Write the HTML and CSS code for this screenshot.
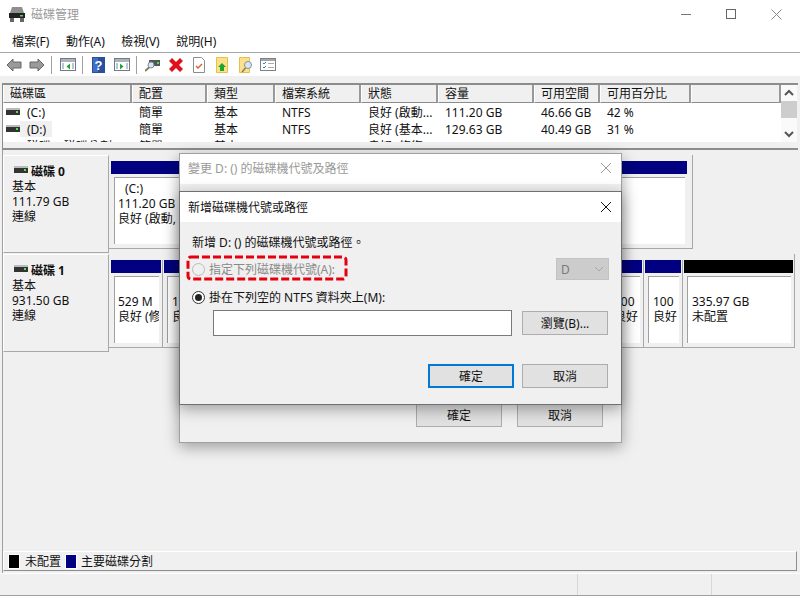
FILE: index.html
```html
<!DOCTYPE html>
<html lang="zh-Hant">
<head>
<meta charset="utf-8">
<title>磁碟管理</title>
<link rel="stylesheet" href="styles.css">
</head>
<body>
<div class="window">
  <header class="titlebar">
    <svg class="app-icon" width="16" height="15" viewBox="0 0 16 15"><path d="M3 0h10l2 6H1z" fill="#8f8f8f"/><rect y="6" width="16" height="5" fill="#222"/><rect x="11" y="8" width="3" height="1.500" fill="#4ce04c"/><rect x="1" y="11" width="4" height="4" fill="#666"/><rect x="11" y="11" width="4" height="4" fill="#666"/></svg>
    <span class="title-text">磁碟管理</span>
    <div class="caption">
      <svg width="11" height="11" viewBox="0 0 11 11"><path d="M0 5.500h10" stroke="#777" fill="none"/></svg>
      <svg width="11" height="11" viewBox="0 0 11 11"><rect x=".5" y=".5" width="9" height="9" stroke="#666" fill="none"/></svg>
      <svg width="11" height="11" viewBox="0 0 11 11"><path d="M.5.500l10 10M10.500.500l-10 10" stroke="#888" fill="none"/></svg>
    </div>
  </header>
  <nav class="menubar"><span>檔案(F)</span><span>動作(A)</span><span>檢視(V)</span><span>說明(H)</span></nav>
  <div class="toolbar">
    <svg class="tool" width="16" height="14" viewBox="0 0 16 14"><path d="M7 1L1 7l6 6V10h8V4H7z" fill="#9a9a9a" stroke="#666"/></svg>
    <svg class="tool t2" width="16" height="14" viewBox="0 0 16 14"><path d="M9 1l6 6-6 6V10H1V4h8z" fill="#9a9a9a" stroke="#666"/></svg>
    <i class="sep"></i>
    <svg class="tool t3" width="16" height="13" viewBox="0 0 16 13"><rect x=".5" y=".5" width="15" height="12" fill="#fff" stroke="#778"/><rect x="1" y="1" width="14" height="3" fill="#a9b4bb"/><path d="M2 6h2M2 8h2M2 10h2M12 6h2M12 8h2M12 10h2" stroke="#6b8fb5"/><path d="M10 5.500v6L6.500 8.500z" fill="#1fa52f"/></svg>
    <i class="sep s2"></i>
    <svg class="tool t4" width="13" height="16" viewBox="0 0 13 16"><rect width="13" height="16" fill="#2a4f9e"/><rect x="1" y="1" width="5" height="14" fill="#3f70c4"/><text x="6.500" y="12.500" class="help-q">?</text></svg>
    <svg class="tool t5" width="16" height="13" viewBox="0 0 16 13"><rect x=".5" y=".5" width="15" height="12" fill="#fff" stroke="#778"/><rect x="1" y="1" width="14" height="3" fill="#a9b4bb"/><path d="M2 6h2M2 8h2M2 10h2M12 6h2M12 8h2M12 10h2" stroke="#6b8fb5"/><path d="M6 5.500v6l3.500-3z" fill="#1fa52f"/></svg>
    <i class="sep s3"></i>
    <svg class="tool t6" width="15" height="14" viewBox="0 0 15 14"><rect x="4" y="2" width="11" height="6" fill="#555"/><rect x="12" y="4" width="2" height="2" fill="#4ce04c"/><circle cx="6" cy="7" r="3" fill="#d7e6f2" stroke="#7b8b99"/><path d="M4 9.500L0 13" stroke="#8a7a5a" stroke-width="2"/></svg>
    <svg class="tool t7" width="14" height="14" viewBox="0 0 14 14"><path d="M3 0l4 4 4-4 3 3-4 4 4 4-3 3-4-4-4 4-3-3 4-4-4-4z" fill="#e0101c"/></svg>
    <svg class="tool t8" width="12" height="16" viewBox="0 0 12 16"><path d="M.5.500h8l3 3v12H.5z" fill="#fff" stroke="#8c8c8c"/><path d="M3 9l2 2 4-4" stroke="#e0562c" stroke-width="1.300" fill="none"/></svg>
    <svg class="tool t9" width="12" height="16" viewBox="0 0 12 16"><path d="M.5.500h11v15H.5z" fill="#fce08a" stroke="#e5c14b"/><path d="M6 6l4 4H8v4H4v-4H2z" fill="#1fa52f"/></svg>
    <svg class="tool t10" width="14" height="16" viewBox="0 0 14 16"><path d="M.5.500h10v15H.5z" fill="#fce08a" stroke="#e5c14b"/><circle cx="9" cy="8" r="3.500" fill="#d6e8f5" stroke="#8393a0"/><path d="M6.500 11L3 15" stroke="#8a7a5a" stroke-width="1.500"/></svg>
    <svg class="tool t11" width="16" height="13" viewBox="0 0 16 13"><rect x=".5" y=".5" width="15" height="12" fill="#fff" stroke="#808080"/><rect x="1" y="1" width="14" height="2" fill="#a5a5a5"/><path d="M3 5l1 1 2-2M3 9l1 1 2-2" stroke="#2b7fd8" fill="none"/><path d="M8 5.500h6M8 9.500h6" stroke="#aaa"/></svg>
  </div>

  <section class="volumes">
    <div class="vol-table">
      <div class="vol-row vol-head"><span>磁碟區</span><span>配置</span><span>類型</span><span>檔案系統</span><span>狀態</span><span>容量</span><span>可用空間</span><span>可用百分比</span><span></span></div>
      <div class="vol-row"><span><svg class="drive" width="14" height="8" viewBox="0 0 14 8"><rect width="14" height="2" fill="#bbb"/><rect y="2" width="14" height="5" fill="#333"/><rect x="10" y="3" width="2" height="2" fill="#4ce04c"/></svg><b class="vol-name">(C:)</b></span><span>簡單</span><span>基本</span><span>NTFS</span><span>良好 (啟動...</span><span>111.20 GB</span><span>46.66 GB</span><span>42 %</span><span></span></div>
      <div class="vol-row"><span><svg class="drive" width="14" height="8" viewBox="0 0 14 8"><rect width="14" height="2" fill="#bbb"/><rect y="2" width="14" height="5" fill="#333"/><rect x="10" y="3" width="2" height="2" fill="#4ce04c"/></svg><b class="vol-name selected">(D:)</b></span><span>簡單</span><span>基本</span><span>NTFS</span><span>良好 (基本...</span><span>129.63 GB</span><span>40.49 GB</span><span>31 %</span><span></span></div>
      <div class="vol-row"><span><svg class="drive" width="14" height="8" viewBox="0 0 14 8"><rect width="14" height="2" fill="#bbb"/></svg><b class="vol-name">磁碟 1 磁碟分割 1</b></span><span>簡單</span><span>基本</span><span></span><span>良好 (修復...</span><span>99 MB</span><span>99 MB</span><span>100 %</span><span></span></div>
    </div>
    <div class="v-scroll">
      <svg width="16" height="16" viewBox="0 0 16 16"><path d="M4 10l4-4 4 4" stroke="#555" stroke-width="2" fill="none"/></svg>
      <i class="thumb"></i>
      <svg class="down" width="16" height="16" viewBox="0 0 16 16"><path d="M4 6l4 4 4-4" stroke="#555" stroke-width="2" fill="none"/></svg>
    </div>
  </section>

  <main class="disks">
    <div class="disk">
      <div class="disk-label">
        <div class="disk-name"><svg class="drive" width="14" height="8" viewBox="0 0 14 8"><rect width="14" height="2" fill="#bbb"/><rect y="2" width="14" height="5" fill="#333"/><rect x="10" y="3" width="2" height="2" fill="#4ce04c"/></svg><strong>磁碟 0</strong></div>
        <div>基本</div><div>111.79 GB</div><div>連線</div>
      </div>
      <div class="parts parts-0">
        <div class="part grow"><i class="bar"></i><div class="part-body top"><div class="part-name">(C:)</div><div>111.20 GB</div><div>良好 (啟動,</div></div></div>
      </div>
    </div>
    <div class="disk">
      <div class="disk-label">
        <div class="disk-name"><svg class="drive" width="14" height="8" viewBox="0 0 14 8"><rect width="14" height="2" fill="#bbb"/><rect y="2" width="14" height="5" fill="#333"/><rect x="10" y="3" width="2" height="2" fill="#4ce04c"/></svg><strong>磁碟 1</strong></div>
        <div>基本</div><div>931.50 GB</div><div>連線</div>
      </div>
      <div class="parts parts-1">
        <div class="part w-a"><i class="bar"></i><div class="part-body"><div>529 M</div><div>良好 (修</div></div></div>
        <div class="part w-b"><i class="bar"></i><div class="part-body wide"><div>16.00 MB</div><div>良好</div></div></div>
        <div class="part w-c"><i class="bar"></i><div class="part-body wide"><div>100</div><div>良好</div></div></div>
        <div class="part w-d"><i class="bar"></i><div class="part-body wide"><div>100</div><div>良好</div></div></div>
        <div class="part w-e"><i class="bar black"></i><div class="part-body wide"><div>335.97 GB</div><div>未配置</div></div></div>
      </div>
    </div>
    <footer class="legend"><i class="swatch black"></i><span>未配置</span><i class="swatch"></i><span>主要磁碟分割</span></footer>
  </main>
  <div class="statusbar"><i></i><i></i><i></i></div>
</div>

<div class="dialog back">
  <div class="dlg-title"><span>變更 D: () 的磁碟機代號及路徑</span>
    <svg width="12" height="12" viewBox="0 0 12 12"><path d="M1 1l10 10M11 1L1 11" stroke="#999" fill="none"/></svg>
  </div>
  <div class="dlg-body back-actions"><button class="btn">確定</button><button class="btn">取消</button></div>
</div>

<div class="dialog front">
  <div class="dlg-title"><span>新增磁碟機代號或路徑</span>
    <svg width="12" height="12" viewBox="0 0 12 12"><path d="M1 1l10 10M11 1L1 11" stroke="#111" fill="none"/></svg>
  </div>
  <div class="dlg-body">
    <p class="intro">新增 D: () 的磁碟機代號或路徑。</p>
    <div class="opt disabled">
      <i class="radio"></i><span>指定下列磁碟機代號(A):</span>
      <div class="select">D<svg width="10" height="6" viewBox="0 0 10 6"><path d="M1 1l4 4 4-4" stroke="#a8a8a8" fill="none"/></svg></div>
    </div>
    <div class="opt"><i class="radio on"></i><span>掛在下列空的 NTFS 資料夾上(M):</span></div>
    <div class="path-row"><div class="input"></div><button class="btn">瀏覽(B)...</button></div>
    <div class="actions"><button class="btn primary">確定</button><button class="btn">取消</button></div>
  </div>
</div>
<svg class="callout" width="162" height="26" viewBox="0 0 162 26"><rect x="2" y="2" width="158" height="22" rx="3" fill="none" stroke="#e6000f" stroke-width="3" stroke-dasharray="8 3"/></svg>
</body>
</html>
```
FILE: styles.css
```css
* { box-sizing: border-box; }
html, body { margin: 0; padding: 0; }
body {
  width: 800px; height: 596px; overflow: hidden; position: relative;
  font: 12px/17px "Noto Sans", "Noto Sans CJK TC", sans-serif;
  color: #111; background: #fff;
}
i { display: block; font-style: normal; }
b { font-weight: normal; }
.window { display: flex; flex-direction: column; height: 596px; background: #f0f0f0; }
.titlebar { height: 33px; background: #fff; display: flex; align-items: center; padding: 0 18px 4px 9px; flex: none; }
.app-icon { margin-right: 6px; }
.title-text { color: #999; }
.caption { margin-left: auto; display: flex; gap: 34px; }
.menubar { height: 20px; background: #fff; display: flex; gap: 16.500px; padding: 0 0 2px 12px; border-bottom: 1px solid #a8a8a8; flex: none; align-items: center; }
.toolbar { height: 23px; background: #fff; display: flex; align-items: center; padding-left: 6px; flex: none; }
.toolbar .sep { width: 1px; height: 18px; background: #a0a0a0; margin-left: 6px; }
.tool { flex: none; }
.t2 { margin-left: 7px; }
.t3 { margin-left: 8px; }
.toolbar .s2 { margin-left: 6px; }
.t4 { margin-left: 9px; }
.t5 { margin-left: 9px; }
.toolbar .s3 { margin-left: 6px; }
.t6 { margin-left: 8px; }
.t7 { margin-left: 9px; }
.t8 { margin-left: 10px; }
.t9 { margin-left: 11px; }
.t10 { margin-left: 11px; }
.t11 { margin-left: 7px; }
.help-q { font: bold 13px "Liberation Sans", sans-serif; fill: #fff; text-anchor: middle; }

.volumes { margin: 7px 2px 0 2px; height: 67px; display: flex; border-top: 2px solid #8d8d8d; border-left: 1px solid #8d8d8d; border-bottom: 2px solid #8d8d8d; background: #f0f0f0; flex: none; }
.vol-table { width: 778px; height: 57px; overflow: hidden; flex: none; background: #fff; }
.vol-row { display: grid; grid-template-columns: 129px 75px 68px 86px 77px 96px 66px 91px 90px; height: 17px; line-height: 17px; white-space: nowrap; padding-top: 1px; }
.vol-row span { padding-left: 7px; overflow: hidden; }
.vol-row span:first-child { padding-left: 3px; display: flex; align-items: center; }
.vol-head { height: 18px; background: #f0f0f0; padding-top: 0; }
.vol-head span, .vol-head span:first-child { border: solid; border-width: 0 2px 1px 1px; border-color: #fff #999 #8d8d8d #fff; padding: 1px 0 0 6px; line-height: 16px; }
.drive { flex: none; }
.vol-name { padding: 0 6px 0 7px; white-space: nowrap; }
.selected { background: #f0f0f0; }
.v-scroll { width: 16px; height: 57px; background: #fafafa; flex: none; display: flex; flex-direction: column; }
.thumb { height: 17px; background: #cdcdcd; }
.v-scroll svg { flex: none; }
.v-scroll .down { margin-top: auto; }

.disks { flex: 1; padding-top: 5px; display: flex; flex-direction: column; border-left: 1px solid #a0a0a0; margin-left: 2px; margin-right: 3px; min-height: 0; }
.disk { display: flex; height: 99px; flex: none; }
.disk-label { width: 106px; flex: none; border: 1px solid; border-color: #fff #a8a8a8 #a8a8a8 #fff; padding: 8px 0 0 8px; height: 98px; line-height: 15px; }
.disk-name { display: flex; align-items: center; margin-left: 2px; }
.disk-name .drive { margin: 0 3px 4px 0; }
.parts { display: flex; padding: 6px 5px 0 2px; border-right: 1px solid #a8a8a8; border-bottom: 1px solid #a8a8a8; height: 94px; line-height: 15px; }
.parts-0 { width: 584px; }
.parts-1 { width: 686px; padding-right: 1px; }
.part { display: flex; flex-direction: column; flex: none; margin-right: 1px; padding-right: 1px; border-right: 1px solid #a8a8a8; }
.part:last-child { margin-right: 0; padding-right: 0; border-right: 0; }
.grow { flex: 1; }
.bar { height: 13px; background: #000080; flex: none; }
.bar.black { background: #000; }
.part-body { margin: 3px 2px 0 3px; height: 67px; background: #fff; border: solid #a0a0a0; border-width: 1px 0 0 1px; padding: 17px 0 0 3px; white-space: nowrap; overflow: hidden; }
.part-body.top { padding-top: 3px; }
.part-body.wide { padding-left: 4px; }
.part-name { padding-left: 7px; }
.w-a { width: 52px; }
.w-b { width: 441px; }
.w-c { width: 38px; }
.w-d { width: 38px; }
.w-e { width: 109px; }

.legend { margin-top: auto; margin-bottom: 2px; height: 20px; flex: none; display: flex; align-items: center; padding-left: 4px; border: 1px solid; border-color: #fff #8d8d8d #8d8d8d #fff; }
.swatch { width: 12px; height: 15px; background: #000080; border: 1px solid #fff; margin: 0 4px 0 4px; flex: none; }
.swatch.black { background: #000; margin-left: 0; margin-right: 5px; }

.statusbar { height: 23px; display: grid; grid-template-columns: 578px 134px 1fr; border-top: 1px solid #fff; flex: none; border-bottom: 1px solid #a0a0a0; }
.statusbar i { border-right: 1px solid #d8d8d8; }
.statusbar i:last-child { border: 0; }

.dialog { position: absolute; left: 179px; width: 443px; background: #f0f0f0; border: 1px solid #707070; box-shadow: 0 4px 14px rgba(0,0,0,.35); display: flex; flex-direction: column; }
.dlg-title { height: 30px; background: #fff; display: flex; align-items: center; justify-content: space-between; padding: 0 9px 0 8px; flex: none; }
.back { top: 153px; height: 290px; border-color: #a0a0a0; }
.back .dlg-title { color: #999; padding-bottom: 2px; }
.front { top: 191px; height: 214px; }
.dlg-body { flex: 1; display: flex; flex-direction: column; }
.dlg-body.back-actions { flex-direction: row; align-items: flex-end; justify-content: flex-end; gap: 15px; padding: 0 18px 15px 0; }
.btn { width: 86px; height: 24px; padding: 0; background: #e1e1e1; border: 1px solid #adadad; font: inherit; color: #111; flex: none; }
.btn.primary { border: 2px solid #0078d7; }
.front .dlg-body { padding: 12px 13px 0 12px; }
.intro { margin: 0 0 6px 0; line-height: 18px; }
.opt { display: flex; align-items: center; height: 22px; }
.opt + .opt { margin-top: 6px; }
.opt.disabled { color: #8a8a8a; }
.radio { width: 13px; height: 13px; border-radius: 50%; border: 1px solid #333; background: #fff; margin-right: 4px; flex: none; position: relative; }
.disabled .radio { border-color: #bbb; background: #f0f0f0; }
.radio.on::after { content: ""; position: absolute; left: 2px; top: 2px; width: 7px; height: 7px; border-radius: 50%; background: #222; }
.select { width: 53px; height: 22px; margin: 0 -1px 0 auto; background: #ccc; border: 1px solid #c2c2c2; display: flex; align-items: center; justify-content: space-between; padding: 0 4px; color: #7a7a7a; }
.path-row { display: flex; align-items: center; margin: 2px 0 0 21px; gap: 10px; }
.input { width: 299px; height: 26px; background: #fff; border: 1px solid #7a7a7a; flex: none; }
.actions { display: flex; justify-content: flex-end; gap: 8px; margin-top: 28px; }
.callout { position: absolute; left: 186px; top: 255px; }
```
